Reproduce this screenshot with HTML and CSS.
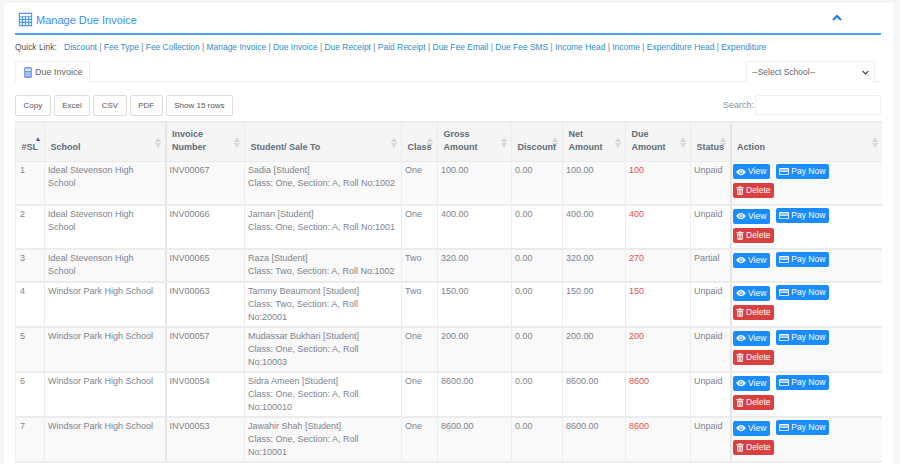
FILE: index.html
```html
<!DOCTYPE html>
<html lang="en">
<head>
	<meta charset="UTF-8">
	<title>Manage Due Invoice</title>
	<link rel="stylesheet" href="styles.css">
</head>
<body>
<svg class="sprites" width="0" height="0">
	<symbol id="i-calc" viewBox="0 0 16 16"><path fill="none" stroke="currentColor" stroke-width="1.200" d="M1.500 1.500h13v13h-13zM1.500 5h13M1.500 8h13M1.500 11h13M4.700 5v9.500M8 5v9.500M11.300 5v9.500"/></symbol>
	<symbol id="i-calc-solid" viewBox="0 0 12 14"><rect x="1" y="0" width="10" height="14" rx="2" fill="#6f9df5"/><rect x="2.500" y="2" width="7" height="3" fill="#dfe9fd"/><path d="M2.500 7h7v1.500h-7zM2.500 10h7v1.500h-7z" fill="#c9dafb"/></symbol>
	<symbol id="i-eye" viewBox="0 0 16 12"><path fill="currentColor" fill-rule="evenodd" d="M8 1C4.500 1 1.700 3.300.3 6c1.400 2.700 4.200 5 7.700 5s6.300-2.300 7.700-5C14.300 3.300 11.500 1 8 1zm0 8a3 3 0 1 1 0-6 3 3 0 0 1 0 6z"/><circle cx="8" cy="6" r="1.600" fill="currentColor"/></symbol>
	<symbol id="i-card" viewBox="0 0 14 12"><path fill="currentColor" fill-rule="evenodd" d="M1.500 1h11A1.500 1.500 0 0 1 14 2.500v7a1.500 1.500 0 0 1-1.500 1.500h-11A1.500 1.500 0 0 1 0 9.500v-7A1.500 1.500 0 0 1 1.500 1zM1.300 3.200v1.300h11.400V3.200zm0 3.100v3.400h11.400V6.300z"/></symbol>
	<symbol id="i-trash" viewBox="0 0 12 13"><path fill="currentColor" fill-rule="evenodd" d="M4.500 0h3l.7 1.500H11.500V3H.5V1.500h3.300zM1.500 4h9l-.6 9H2.100zm2 1.500v6h1v-6zm2 0v6h1v-6zm2 0v6h1v-6z"/></symbol>
</svg>

<div class="panel">
	<div class="panel-head">
		<h1><svg class="title-icon"><use href="#i-calc"/></svg>Manage Due Invoice</h1>
		<svg class="collapse" viewBox="0 0 10 7"><path d="M1 6l4-4 4 4" fill="none" stroke="currentColor" stroke-width="2"/></svg>
	</div>

	<div class="quick-links">
		<span class="quick-label">Quick Link:</span>
		<a href="#">Discount</a> | <a href="#">Fee Type</a> | <a href="#">Fee Collection</a> | <a href="#">Manage Invoice</a> | <a href="#">Due Invoice</a> | <a href="#">Due Receipt</a> | <a href="#">Paid Receipt</a> | <a href="#">Due Fee Email</a> | <a href="#">Due Fee SMS</a> | <a href="#">Income Head</a> | <a href="#">Income</a> | <a href="#">Expenditure Head</a> | <a href="#">Expenditure</a>
	</div>

	<div class="tabs">
		<div class="tab"><svg class="tab-icon"><use href="#i-calc-solid"/></svg>Due Invoice</div>
		<div class="school-box">
			<span>--Select School--</span>
			<svg class="select-arrow" viewBox="0 0 10 7"><path d="M1 1.500l4 4 4-4" fill="none" stroke="currentColor" stroke-width="1.600"/></svg>
		</div>
	</div>

	<div class="tools">
		<div class="export-btns">
			<button>Copy</button>
			<button>Excel</button>
			<button>CSV</button>
			<button>PDF</button>
			<button>Show 15 rows</button>
		</div>
		<label class="search">Search:<input type="text"></label>
	</div>

	<table class="invoices">
		<colgroup>
			<col class="c-sl"><col class="c-school"><col class="c-inv"><col class="c-student"><col class="c-class"><col class="c-gross"><col class="c-disc"><col class="c-net"><col class="c-due"><col class="c-status"><col class="c-action">
		</colgroup>
		<thead>
			<tr>
				<th class="sorted">#SL</th>
				<th class="sort wide-r">School</th>
				<th class="sort">Invoice Number</th>
				<th class="sort">Student/ Sale To</th>
				<th class="sort">Class</th>
				<th class="sort">Gross Amount</th>
				<th class="sort">Discount</th>
				<th class="sort">Net Amount</th>
				<th class="sort">Due Amount</th>
				<th class="sort">Status</th>
				<th class="sort">Action</th>
			</tr>
		</thead>
		<tbody>
			<tr class="h-44">
				<td>1</td><td class="wide-r">Ideal Stevenson High School</td><td>INV00067</td>
				<td>Sadia [Student]<br>Class: One, Section: A, Roll No:1002</td>
				<td>One</td><td>100.00</td><td>0.00</td><td>100.00</td><td class="due">100</td><td>Unpaid</td>
				<td class="actions"><a class="btn blue"><svg class="ic-eye"><use href="#i-eye"/></svg>View</a><a class="btn blue"><svg class="ic-card"><use href="#i-card"/></svg>Pay Now</a><a class="btn red"><svg class="ic-trash"><use href="#i-trash"/></svg>Delete</a></td>
			</tr>
			<tr class="h-44">
				<td>2</td><td class="wide-r">Ideal Stevenson High School</td><td>INV00066</td>
				<td>Jaman [Student]<br>Class: One, Section: A, Roll No:1001</td>
				<td>One</td><td>400.00</td><td>0.00</td><td>400.00</td><td class="due">400</td><td>Unpaid</td>
				<td class="actions"><a class="btn blue"><svg class="ic-eye"><use href="#i-eye"/></svg>View</a><a class="btn blue"><svg class="ic-card"><use href="#i-card"/></svg>Pay Now</a><a class="btn red"><svg class="ic-trash"><use href="#i-trash"/></svg>Delete</a></td>
			</tr>
			<tr class="h-34">
				<td>3</td><td class="wide-r">Ideal Stevenson High School</td><td>INV00065</td>
				<td>Raza [Student]<br>Class: Two, Section: A, Roll No:1002</td>
				<td>Two</td><td>320.00</td><td>0.00</td><td>320.00</td><td class="due">270</td><td>Partial</td>
				<td class="actions"><a class="btn blue"><svg class="ic-eye"><use href="#i-eye"/></svg>View</a><a class="btn blue"><svg class="ic-card"><use href="#i-card"/></svg>Pay Now</a></td>
			</tr>
			<tr class="h-45">
				<td>4</td><td class="wide-r">Windsor Park High School</td><td>INV00063</td>
				<td>Tammy Beaumont [Student]<br>Class: Two, Section: A, Roll No:20001</td>
				<td>Two</td><td>150.00</td><td>0.00</td><td>150.00</td><td class="due">150</td><td>Unpaid</td>
				<td class="actions"><a class="btn blue"><svg class="ic-eye"><use href="#i-eye"/></svg>View</a><a class="btn blue"><svg class="ic-card"><use href="#i-card"/></svg>Pay Now</a><a class="btn red"><svg class="ic-trash"><use href="#i-trash"/></svg>Delete</a></td>
			</tr>
			<tr class="h-45">
				<td>5</td><td class="wide-r">Windsor Park High School</td><td>INV00057</td>
				<td>Mudassar Bukhari [Student]<br>Class: One, Section: A, Roll No:10003</td>
				<td>One</td><td>200.00</td><td>0.00</td><td>200.00</td><td class="due">200</td><td>Unpaid</td>
				<td class="actions"><a class="btn blue"><svg class="ic-eye"><use href="#i-eye"/></svg>View</a><a class="btn blue"><svg class="ic-card"><use href="#i-card"/></svg>Pay Now</a><a class="btn red"><svg class="ic-trash"><use href="#i-trash"/></svg>Delete</a></td>
			</tr>
			<tr class="h-45">
				<td>6</td><td class="wide-r">Windsor Park High School</td><td>INV00054</td>
				<td>Sidra Ameen [Student]<br>Class: One, Section: A, Roll No:100010</td>
				<td>One</td><td>8600.00</td><td>0.00</td><td>8600.00</td><td class="due">8600</td><td>Unpaid</td>
				<td class="actions"><a class="btn blue"><svg class="ic-eye"><use href="#i-eye"/></svg>View</a><a class="btn blue"><svg class="ic-card"><use href="#i-card"/></svg>Pay Now</a><a class="btn red"><svg class="ic-trash"><use href="#i-trash"/></svg>Delete</a></td>
			</tr>
			<tr class="h-45">
				<td>7</td><td class="wide-r">Windsor Park High School</td><td>INV00053</td>
				<td>Jawahir Shah [Student]<br>Class: One, Section: A, Roll No:10001</td>
				<td>One</td><td>8600.00</td><td>0.00</td><td>8600.00</td><td class="due">8600</td><td>Unpaid</td>
				<td class="actions"><a class="btn blue"><svg class="ic-eye"><use href="#i-eye"/></svg>View</a><a class="btn blue"><svg class="ic-card"><use href="#i-card"/></svg>Pay Now</a><a class="btn red"><svg class="ic-trash"><use href="#i-trash"/></svg>Delete</a></td>
			</tr>
		</tbody>
	</table>
</div>
</body>
</html>
```

FILE: styles.css
```css
html, body {
	height: 100%;
}

body {
	margin: 0;
	padding: 3px 7px 0 4px;
	box-sizing: border-box;
	overflow: hidden;
	background: #f6f6f6;
	font-family: "Liberation Sans", Arial, sans-serif;
	font-size: 9px;
	color: #7b838e;
}

.sprites {
	position: absolute;
}

.panel {
	background: #fff;
	padding: 0 12px 0 11px;
	height: 470px;
}

.panel-head {
	display: flex;
	align-items: center;
	justify-content: space-between;
	height: 30px;
	border-bottom: 2px solid #4fa3fb;
}

h1 {
	display: flex;
	align-items: center;
	margin: 4px 0 0;
	font-size: 11px;
	font-weight: normal;
	color: #3a8ff5;
}

.title-icon {
	width: 15px;
	height: 15px;
	margin: -2px 3px 0 3px;
	color: #4a96f2;
}

.collapse {
	width: 10px;
	height: 7px;
	margin: 0 39px 2px 0;
	color: #1f7bf2;
}

.quick-links {
	height: 26px;
	line-height: 25px;
	font-size: 8.45px;
	white-space: nowrap;
}

.quick-label {
	margin-right: 5px;
	color: #555;
}

.quick-links a {
	color: #2f8ec9;
	text-decoration: none;
}

.tabs {
	display: flex;
	justify-content: space-between;
	height: 20px;
	border-bottom: 1px solid #eee;
}

.tab {
	display: flex;
	align-items: center;
	width: 75px;
	height: 21px;
	box-sizing: border-box;
	padding-left: 7px;
	background: #fff;
	border: 1px solid #eee;
	border-bottom: none;
	border-radius: 2px 2px 0 0;
	color: #666;
}

.tab-icon {
	width: 10px;
	height: 11px;
	margin-right: 2px;
}

.school-box {
	display: flex;
	align-items: center;
	justify-content: space-between;
	width: 129px;
	height: 21px;
	box-sizing: border-box;
	margin-right: 6px;
	padding: 0 5px;
	background: #fff;
	border: 1px solid #eee;
	border-bottom: none;
	border-radius: 2px 2px 0 0;
	font-size: 8.5px;
	color: #666;
}

.select-arrow {
	width: 7px;
	height: 5px;
	color: #333;
}

.tools {
	display: flex;
	align-items: flex-start;
	justify-content: space-between;
	height: 26px;
	padding-top: 13px;
}

.export-btns {
	display: flex;
	gap: 3px;
}

.export-btns button {
	height: 21px;
	padding: 0 7.500px;
	background: #fff;
	border: 1px solid #ddd;
	border-radius: 2px;
	font-family: inherit;
	font-size: 8px;
	color: #555;
}

.search {
	display: flex;
	align-items: center;
	color: #8a929c;
}

.search input {
	width: 126px;
	height: 20px;
	box-sizing: border-box;
	margin-left: 1px;
	background: #fff;
	border: 1px solid #eef1f4;
	border-radius: 2px;
}

.invoices {
	table-layout: fixed;
	width: 866px;
	border-collapse: collapse;
	border-bottom: 2px solid #e6e6e6;
}

.c-sl { width: 29px; }
.c-school { width: 121px; }
.c-inv { width: 79px; }
.c-student { width: 157px; }
.c-class { width: 36px; }
.c-gross { width: 74px; }
.c-disc { width: 51px; }
.c-net { width: 63px; }
.c-due { width: 65px; }
.c-status { width: 40px; }
.c-action { width: 151px; }

.invoices th {
	position: relative;
	z-index: 0;
	height: 39px;
	box-sizing: border-box;
	padding: 0 16px 7px 5.500px;
	background: #f5f5f5;
	border: 1px solid #ebebeb;
	border-top: 2px solid #ebebeb;
	vertical-align: bottom;
	text-align: left;
	line-height: 13px;
	font-size: 9px;
	font-weight: bold;
	color: #5f6b7a;
}

.invoices th:first-child {
	padding-right: 0;
}

.invoices th:nth-child(5),
.invoices th:nth-child(7),
.invoices th:nth-child(10) {
	padding-right: 0;
}

.invoices th.sort::before,
.invoices th.sort::after,
.invoices th.sorted::before {
	content: "";
	position: absolute;
	z-index: -1;
	right: 4px;
	border-left: 3px solid transparent;
	border-right: 3px solid transparent;
}

.invoices th.sort::before {
	top: 14px;
	border-bottom: 5px solid #d5d8dc;
}

.invoices th.sort::after {
	top: 20px;
	border-top: 5px solid #d5d8dc;
}

.invoices th.sorted::before {
	top: 14px;
	right: 4px;
	border-left-width: 2.500px;
	border-right-width: 2.500px;
	border-bottom: 4px solid #4a4fc4;
}

.invoices td {
	box-sizing: border-box;
	padding: 2px 3px 0 3px;
	border: 1px solid #ececec;
	border-bottom-width: 2px;
	vertical-align: top;
	line-height: 13px;
	overflow: hidden;
}

.invoices tbody tr:nth-child(odd) td {
	background: #f9f9f9;
}

.invoices td:first-child {
	padding-left: 4px;
}

.invoices .wide-r {
	border-right: 2px solid #e6e6e6;
}

.invoices th:last-child,
.invoices td:last-child {
	border-left: 2px solid #e6e6e6;
	border-right: none;
}

.h-44 { height: 44px; }
.h-34 { height: 33px; }
.h-45 { height: 45px; }

.invoices .due {
	color: #e2504c;
}

.invoices td.actions {
	padding: 2px 0 0 1px;
	line-height: 0;
}

.btn {
	display: inline-flex;
	align-items: center;
	height: 15px;
	box-sizing: border-box;
	margin: 0 6px 4px 0;
	padding: 0 3.500px;
	border-radius: 2px;
	font-size: 8.500px;
	line-height: 15px;
	color: #fff;
	cursor: pointer;
}

.btn svg {
	margin-right: 2px;
}

.blue {
	background: #1a8cff;
}

.red {
	background: #d9403f;
}

.ic-eye {
	width: 10px;
	height: 8px;
}

.ic-card {
	width: 10px;
	height: 9px;
}

.ic-trash {
	width: 8px;
	height: 9px;
}
```
